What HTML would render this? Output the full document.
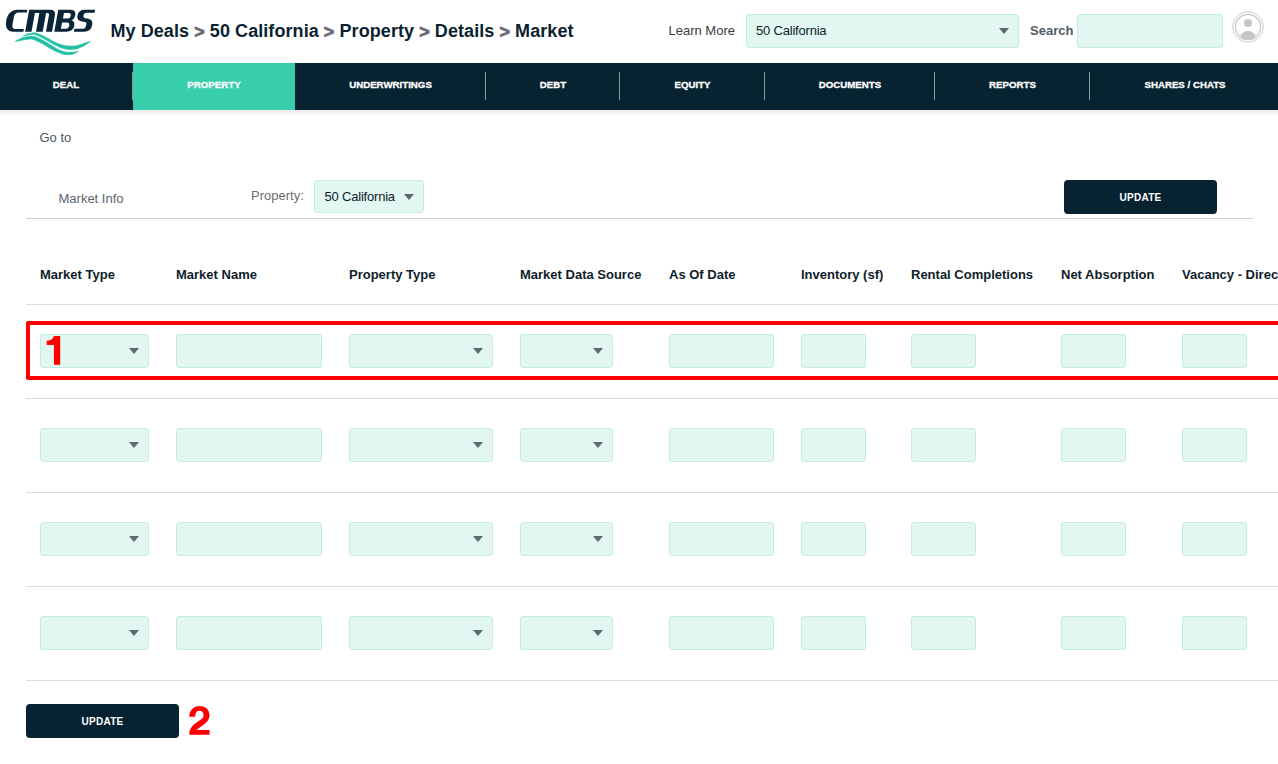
<!DOCTYPE html>
<html><head><meta charset="utf-8">
<style>
*{margin:0;padding:0;box-sizing:border-box}
html,body{width:1278px;height:764px;overflow:hidden;background:#fff;font-family:"Liberation Sans",sans-serif}
.a{position:absolute;white-space:nowrap}
.bc{left:110.5px;top:21.5px;font-size:18px;line-height:18px;font-weight:bold;color:#0b1f2f;letter-spacing:0.07px}
.bc i{font-style:normal;color:#646e78;position:relative;top:1.2px;-webkit-text-stroke:0.7px #646e78}
.nav{position:absolute;left:0;top:63px;width:1278px;height:47px;background:#072231}
.shadow{position:absolute;left:0;top:110px;width:1278px;height:6px;background:linear-gradient(#ece9ea,#fff)}
.tab{position:absolute;top:0;height:47px;color:#fff;font-size:9.7px;font-weight:bold;line-height:10px;text-align:center;padding-top:17.3px;-webkit-text-stroke:0.3px #fff}
.dv{position:absolute;top:9px;width:1px;height:28px;background:#8a9aa4}
.inp{position:absolute;height:34px;background:#e2f7f2;border:1px solid #c1eee1;border-radius:3px}
.arr{position:absolute;width:0;height:0;border-left:5px solid transparent;border-right:5px solid transparent;border-top:6.5px solid #5e6870}
.hd{top:268.2px;font-size:13px;line-height:13px;font-weight:bold;color:#0d1d2b}
.hr{position:absolute;left:26px;width:1252px;height:1px;background:#dddddd}
.btn{position:absolute;background:#072231;border-radius:4px;color:#fff;font-size:10px;font-weight:bold;letter-spacing:0.25px;text-align:center;padding-left:0px}
.num{position:absolute;color:#ff0000;font-weight:bold;font-size:40px;line-height:40px}
</style></head><body>

<!-- logo -->
<svg class="a" style="left:0;top:0" width="100" height="60" viewBox="0 0 100 60">
 <g fill="#0a2538" fill-rule="evenodd" transform="translate(0,31.7) skewX(-10.2) translate(0,-31.7)">
  <path d="M23.4,9.7 L13.5,9.7 C7.5,9.7 4.2,14 4.2,20.7 C4.2,27.5 7.5,31.7 13.5,31.7 L23.4,31.7 L23.4,29 L15,29 C12.2,29 11.2,27 11.2,24 L11.2,17.5 C11.2,14.5 12.5,12.6 15.5,12.6 L23.4,12.6 Z"/>
  <path d="M25.2,31.7 L25.2,9.7 L46,9.7 Q52,9.7 52,15.5 L52,31.7 L46,31.7 L46,15 Q46,13 44,13 L42.7,13 L42.7,31.7 L36,31.7 L36,13 L31.5,13 L31.5,31.7 Z"/>
  <path d="M54.3,9.7 L66,9.7 Q72.3,9.7 72.3,15 Q72.3,19 69.5,20.3 Q73.2,21.5 73.2,26 Q73.2,31.7 66,31.7 L54.3,31.7 Z M60.6,13 L65.5,13 Q67.9,13 67.9,15.8 Q67.9,18.6 65.5,18.6 L60.6,18.6 Z M60.4,22.5 L65.5,22.5 Q68.1,22.5 68.1,25.6 Q68.1,28.8 65.5,28.8 L60.4,28.8 Z"/>
  <path d="M91.2,9.7 L81,9.7 Q74.5,9.7 74.5,15.5 Q74.5,20.5 80,21.5 L84,22.2 Q85,22.4 85,24 Q85,28.8 83,28.8 L73.9,28.8 L73.9,31.7 L84,31.7 Q91,31.7 91,25 Q91,19.5 86,18.7 L82,18 Q80.6,17.8 80.6,15.5 Q80.6,12.7 83,12.7 L91.2,12.7 Z"/>
 </g>
 <g fill="#22c0a3" stroke="#22c0a3" stroke-width="0.6" stroke-linejoin="round">
  <path d="M23.20,35.80 C23.83,35.53 25.47,34.65 27.00,34.20 C28.53,33.75 30.90,33.28 32.40,33.10 C33.90,32.92 34.18,32.63 36.00,33.10 C37.82,33.57 40.85,34.77 43.30,35.90 C45.75,37.03 48.25,38.62 50.70,39.90 C53.15,41.18 55.57,42.62 58.00,43.60 C60.43,44.58 62.87,45.33 65.30,45.75 C67.73,46.17 70.57,46.14 72.60,46.10 C74.63,46.06 75.53,45.97 77.50,45.50 C79.47,45.03 82.27,43.98 84.40,43.30 C86.53,42.62 89.32,41.72 90.30,41.40 L90.30,41.40 C89.32,42.10 86.53,44.40 84.40,45.60 C82.27,46.80 79.47,47.97 77.50,48.60 C75.53,49.23 74.63,49.33 72.60,49.40 C70.57,49.47 67.73,49.48 65.30,49.00 C62.87,48.52 60.43,47.58 58.00,46.50 C55.57,45.42 53.15,43.85 50.70,42.50 C48.25,41.15 45.75,39.63 43.30,38.40 C40.85,37.17 37.82,35.73 36.00,35.10 C34.18,34.47 33.90,34.58 32.40,34.60 C30.90,34.62 28.53,35.00 27.00,35.20 C25.47,35.40 23.83,35.70 23.20,35.80 Z"/>
  <path d="M15.10,41.60 C16.28,40.97 19.53,38.68 22.20,37.80 C24.87,36.92 28.80,36.42 31.10,36.30 C33.40,36.18 33.97,36.38 36.00,37.10 C38.03,37.82 40.85,39.28 43.30,40.60 C45.75,41.92 48.25,43.53 50.70,45.00 C53.15,46.47 55.57,48.23 58.00,49.40 C60.43,50.57 62.87,51.55 65.30,52.00 C67.73,52.45 70.38,52.23 72.60,52.10 C74.82,51.97 77.60,51.35 78.60,51.20 L78.60,51.20 C77.60,51.70 74.82,53.63 72.60,54.20 C70.38,54.77 67.73,54.92 65.30,54.60 C62.87,54.28 60.43,53.28 58.00,52.30 C55.57,51.32 53.15,50.03 50.70,48.70 C48.25,47.37 45.75,45.65 43.30,44.30 C40.85,42.95 38.03,41.47 36.00,40.60 C33.97,39.73 33.40,39.17 31.10,39.10 C28.80,39.03 24.87,39.78 22.20,40.20 C19.53,40.62 16.28,41.37 15.10,41.60 Z"/>
 </g>
</svg>

<div class="a bc">My Deals <i>&gt;</i> 50 California <i>&gt;</i> Property <i>&gt;</i> Details <i>&gt;</i> Market</div>

<div class="a" style="left:668.5px;top:23.7px;font-size:13px;line-height:13px;color:#3b3b3b">Learn More</div>
<div class="inp" style="left:746px;top:14px;width:273px;height:34px"></div>
<div class="a" style="left:756px;top:23.7px;font-size:13px;line-height:13px;color:#0f1c26;letter-spacing:-0.2px">50 California</div>
<div class="arr" style="left:998.5px;top:27.5px"></div>
<div class="a" style="left:1030px;top:23.5px;font-size:13px;line-height:13px;font-weight:bold;color:#525c66">Search</div>
<div class="inp" style="left:1077px;top:14px;width:146px;height:34px"></div>
<svg class="a" style="left:1230px;top:9px" width="36" height="36" viewBox="0 0 36 36">
 <circle cx="18" cy="18" r="15.3" fill="none" stroke="#cfcfcf" stroke-width="1"/>
 <circle cx="18" cy="18" r="12.7" fill="none" stroke="#c9c9c9" stroke-width="1.3"/>
 <circle cx="18" cy="14" r="4" fill="#c6c6c6"/>
 <clipPath id="cp"><circle cx="18" cy="18" r="12.2"/></clipPath>
 <ellipse cx="18" cy="28.5" rx="8" ry="6.5" fill="#c6c6c6" clip-path="url(#cp)"/>
</svg>

<div class="nav">
 <div class="tab" style="left:0;width:132px">DEAL</div>
 <div class="dv" style="left:132px"></div>
 <div class="tab" style="left:133px;width:162px;background:#38cdab">PROPERTY</div>
 <div class="tab" style="left:295px;width:191px">UNDERWRITINGS</div>
 <div class="dv" style="left:485px"></div>
 <div class="tab" style="left:486px;width:134px">DEBT</div>
 <div class="dv" style="left:619px"></div>
 <div class="tab" style="left:620px;width:145px">EQUITY</div>
 <div class="dv" style="left:764px"></div>
 <div class="tab" style="left:765px;width:170px">DOCUMENTS</div>
 <div class="dv" style="left:934px"></div>
 <div class="tab" style="left:935px;width:155px">REPORTS</div>
 <div class="dv" style="left:1089px"></div>
 <div class="tab" style="left:1090px;width:190px">SHARES / CHATS</div>
</div>
<div class="shadow"></div>

<div class="a" style="left:39.5px;top:131.3px;font-size:13px;line-height:13px;color:#50575e">Go to</div>
<div class="a" style="left:58.5px;top:191.6px;font-size:13px;line-height:13px;color:#5b6570">Market Info</div>
<div class="a" style="left:251px;top:189.3px;font-size:13px;line-height:13px;color:#6c6c6c">Property:</div>
<div class="inp" style="left:314px;top:180px;width:110px;height:33px"></div>
<div class="a" style="left:324.5px;top:189.8px;font-size:13px;line-height:13px;color:#0f1c26;letter-spacing:-0.2px">50 California</div>
<div class="arr" style="left:403.5px;top:193.8px"></div>
<div class="btn" style="left:1064px;top:180px;width:153px;height:34px;line-height:36px">UPDATE</div>
<div style="position:absolute;left:26px;top:218px;width:1227px;height:1px;background:#cfcfcf"></div>

<div class="a hd" style="left:40px">Market Type</div>
<div class="a hd" style="left:176px">Market Name</div>
<div class="a hd" style="left:349px">Property Type</div>
<div class="a hd" style="left:520px">Market Data Source</div>
<div class="a hd" style="left:669px">As Of Date</div>
<div class="a hd" style="left:801px">Inventory (sf)</div>
<div class="a hd" style="left:911px">Rental Completions</div>
<div class="a hd" style="left:1061px">Net Absorption</div>
<div class="a hd" style="left:1182px">Vacancy - Direct</div>

<div class="hr" style="top:304px"></div>
<div class="hr" style="top:398px"></div>
<div class="hr" style="top:492px"></div>
<div class="hr" style="top:586px"></div>
<div class="hr" style="top:680px"></div>

<div class="inp" style="left:40px;top:334px;width:109px"></div>
<div class="arr" style="left:128.5px;top:348px"></div>
<div class="inp" style="left:176px;top:334px;width:146px"></div>
<div class="inp" style="left:349px;top:334px;width:144px"></div>
<div class="arr" style="left:472.5px;top:348px"></div>
<div class="inp" style="left:520px;top:334px;width:93px"></div>
<div class="arr" style="left:592.5px;top:348px"></div>
<div class="inp" style="left:669px;top:334px;width:105px"></div>
<div class="inp" style="left:801px;top:334px;width:65px"></div>
<div class="inp" style="left:911px;top:334px;width:65px"></div>
<div class="inp" style="left:1061px;top:334px;width:65px"></div>
<div class="inp" style="left:1182px;top:334px;width:65px"></div>
<div class="inp" style="left:40px;top:428px;width:109px"></div>
<div class="arr" style="left:128.5px;top:442px"></div>
<div class="inp" style="left:176px;top:428px;width:146px"></div>
<div class="inp" style="left:349px;top:428px;width:144px"></div>
<div class="arr" style="left:472.5px;top:442px"></div>
<div class="inp" style="left:520px;top:428px;width:93px"></div>
<div class="arr" style="left:592.5px;top:442px"></div>
<div class="inp" style="left:669px;top:428px;width:105px"></div>
<div class="inp" style="left:801px;top:428px;width:65px"></div>
<div class="inp" style="left:911px;top:428px;width:65px"></div>
<div class="inp" style="left:1061px;top:428px;width:65px"></div>
<div class="inp" style="left:1182px;top:428px;width:65px"></div>
<div class="inp" style="left:40px;top:522px;width:109px"></div>
<div class="arr" style="left:128.5px;top:536px"></div>
<div class="inp" style="left:176px;top:522px;width:146px"></div>
<div class="inp" style="left:349px;top:522px;width:144px"></div>
<div class="arr" style="left:472.5px;top:536px"></div>
<div class="inp" style="left:520px;top:522px;width:93px"></div>
<div class="arr" style="left:592.5px;top:536px"></div>
<div class="inp" style="left:669px;top:522px;width:105px"></div>
<div class="inp" style="left:801px;top:522px;width:65px"></div>
<div class="inp" style="left:911px;top:522px;width:65px"></div>
<div class="inp" style="left:1061px;top:522px;width:65px"></div>
<div class="inp" style="left:1182px;top:522px;width:65px"></div>
<div class="inp" style="left:40px;top:616px;width:109px"></div>
<div class="arr" style="left:128.5px;top:630px"></div>
<div class="inp" style="left:176px;top:616px;width:146px"></div>
<div class="inp" style="left:349px;top:616px;width:144px"></div>
<div class="arr" style="left:472.5px;top:630px"></div>
<div class="inp" style="left:520px;top:616px;width:93px"></div>
<div class="arr" style="left:592.5px;top:630px"></div>
<div class="inp" style="left:669px;top:616px;width:105px"></div>
<div class="inp" style="left:801px;top:616px;width:65px"></div>
<div class="inp" style="left:911px;top:616px;width:65px"></div>
<div class="inp" style="left:1061px;top:616px;width:65px"></div>
<div class="inp" style="left:1182px;top:616px;width:65px"></div>


<div style="position:absolute;left:26px;top:321px;width:1260px;height:59px;border:4px solid #ff0000;border-radius:2px"></div>
<svg class="a" style="left:0;top:0;overflow:visible" width="1" height="1"><path fill="#ff0000" d="M53.9,336 L60.2,336 L60.2,364.8 L53.9,364.8 L53.9,344.9 L46.7,344.9 L46.7,340.7 C50.5,340.7 53.2,339.2 53.9,336 Z"/>
<path fill="#ff0000" d="M189.3,716.8 C189.3,710.2 193.6,705.9 199.7,705.9 C205.6,705.9 209.5,709.7 209.5,715.3 C209.5,719 207.8,721.5 204.5,724 L196.3,730 L209.6,730 L209.6,734.8 L189.3,734.8 C189.3,729.5 191.5,726 196.5,722.6 L200.8,719.6 C202.7,718.3 203.6,717 203.6,715.2 C203.6,712.5 202,710.7 199.5,710.7 C196.8,710.7 195.3,712.6 195.2,716.8 Z"/></svg>

<div class="btn" style="left:26px;top:704px;width:153px;height:34px;line-height:36px">UPDATE</div>

</body></html>
